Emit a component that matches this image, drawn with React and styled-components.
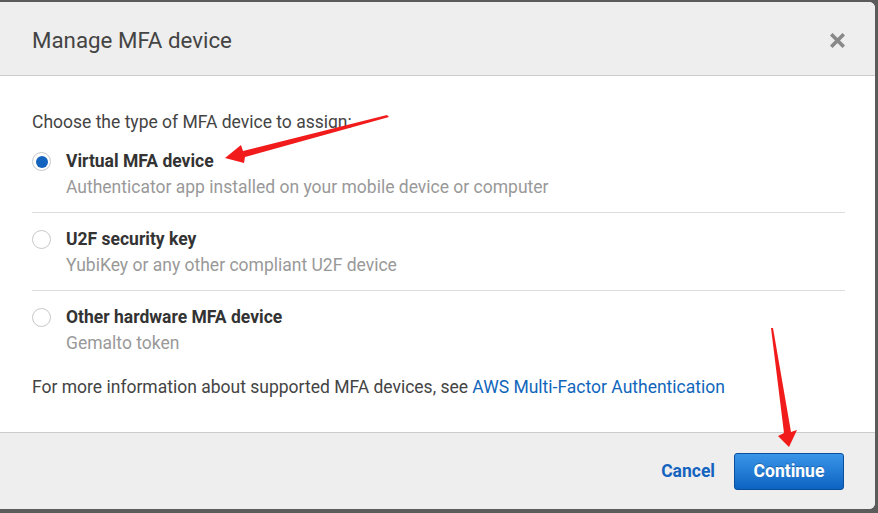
import styled, { createGlobalStyle } from "styled-components";

const GlobalStyle = createGlobalStyle`
  html, body {
    margin: 0;
    padding: 0;
    background: #5b5b5b;
  }
  body {
    font-family: Roboto, "Liberation Sans", Arial, sans-serif;
    height: 513px;
    overflow: hidden;
  }
`;

const Stage = styled.div`
  position: relative;
  width: 878px;
  height: 513px;
  padding-top: 2px;
  box-sizing: border-box;
`;

const Dialog = styled.div`
  width: 875px;
  height: 507px;
  background: #fff;
  border-radius: 0 6px 6px 0;
  overflow: hidden;
  display: flex;
  flex-direction: column;
`;

const Header = styled.div`
  height: 74px;
  background: #eeeeee;
  border-bottom: 1px solid #cccccc;
  display: flex;
  align-items: center;
  justify-content: space-between;
  padding: 0 30px 0 32px;
  box-sizing: border-box;
  flex-shrink: 0;
`;

const Title = styled.h2`
  margin: 3px 0 0;
  font-size: 22.3px;
  font-weight: 400;
  color: #444;
`;

const Close = styled.button`
  border: 0;
  background: none;
  padding: 0;
  width: 15px;
  height: 15px;
  margin-top: 3px;
  display: flex;
  cursor: pointer;
`;

const Body = styled.div`
  flex: 1;
  padding: 33px 30px 0 32px;
`;

const Intro = styled.p`
  margin: 0;
  font-size: 17.5px;
  line-height: 26px;
  color: #444;
`;

const Option = styled.label`
  display: flex;
  gap: 15px;
  padding: 13px 0 12px;
  border-bottom: ${({ $last }) => ($last ? "none" : "1px solid #dddddd")};
  cursor: pointer;
`;

const Radio = styled.span`
  width: 19px;
  height: 19px;
  margin-top: 4px;
  border-radius: 50%;
  border: 1px solid #c8c8c8;
  box-sizing: border-box;
  background: #fff;
  display: flex;
  align-items: center;
  justify-content: center;
  flex-shrink: 0;

  &::after {
    content: "";
    width: 12px;
    height: 12px;
    border-radius: 50%;
    background: ${({ $checked }) => ($checked ? "#1464bf" : "transparent")};
  }
`;

const OptionText = styled.div`
  display: flex;
  flex-direction: column;
  font-size: 17.5px;
  line-height: 26px;
`;

const OptionLabel = styled.span`
  font-weight: 700;
  color: #333;
`;

const OptionDesc = styled.span`
  color: #999;
`;

const Info = styled.p`
  margin: 6px 0 0;
  font-size: 17.5px;
  line-height: 26px;
  color: #444;
`;

const Link = styled.a`
  color: #1166bb;
  text-decoration: none;
`;

const Footer = styled.div`
  height: 77px;
  background: #eeeeee;
  border-top: 1px solid #cccccc;
  box-sizing: border-box;
  display: flex;
  align-items: center;
  justify-content: flex-end;
  gap: 19px;
  padding: 0 31px 0 0;
  flex-shrink: 0;
`;

const TextButton = styled.button`
  border: 0;
  background: none;
  padding: 0;
  font-family: inherit;
  font-size: 17.5px;
  font-weight: 700;
  color: #1464bf;
  cursor: pointer;
`;

const PrimaryButton = styled.button`
  width: 110px;
  height: 37px;
  border: 1px solid #0b4f9c;
  border-radius: 3px;
  background: linear-gradient(#3a95e8, #0d63c2);
  color: #fff;
  font-family: inherit;
  font-size: 17.5px;
  font-weight: 700;
  text-shadow: 0 -1px 0 rgba(0, 0, 0, 0.25);
  cursor: pointer;
`;

const Annotations = styled.svg`
  position: absolute;
  left: 0;
  top: 0;
  pointer-events: none;
`;

const options = [
  {
    label: "Virtual MFA device",
    desc: "Authenticator app installed on your mobile device or computer",
    checked: true,
  },
  { label: "U2F security key", desc: "YubiKey or any other compliant U2F device" },
  { label: "Other hardware MFA device", desc: "Gemalto token" },
];

export default function App() {
  return (
    <Stage>
      <GlobalStyle />
      <Dialog>
        <Header>
          <Title>Manage MFA device</Title>
          <Close aria-label="Close">
            <svg width="15" height="15" viewBox="0 0 15 15">
              <path d="M2.5 2.5l10 10M12.5 2.5l-10 10" stroke="#888" strokeWidth="3.6" strokeLinecap="square" />
            </svg>
          </Close>
        </Header>
        <Body>
          <Intro>Choose the type of MFA device to assign:</Intro>
          {options.map((o, i) => (
            <Option key={o.label} $last={i === options.length - 1}>
              <Radio $checked={o.checked} />
              <OptionText>
                <OptionLabel>{o.label}</OptionLabel>
                <OptionDesc>{o.desc}</OptionDesc>
              </OptionText>
            </Option>
          ))}
          <Info>
            For more information about supported MFA devices, see{" "}
            <Link href="#">AWS Multi-Factor Authentication</Link>
          </Info>
        </Body>
        <Footer>
          <TextButton>Cancel</TextButton>
          <PrimaryButton>Continue</PrimaryButton>
        </Footer>
      </Dialog>
      <Annotations width="878" height="513" viewBox="0 0 878 513">
        <polygon
          points="225,158 241,145 243,151 387,115 389,117 245,157 244,163"
          fill="#f21b1b"
        />
        <polygon
          points="771,328 773,328 791,432 797,430 789,447 778,436 784,433"
          fill="#f21b1b"
        />
      </Annotations>
    </Stage>
  );
}
